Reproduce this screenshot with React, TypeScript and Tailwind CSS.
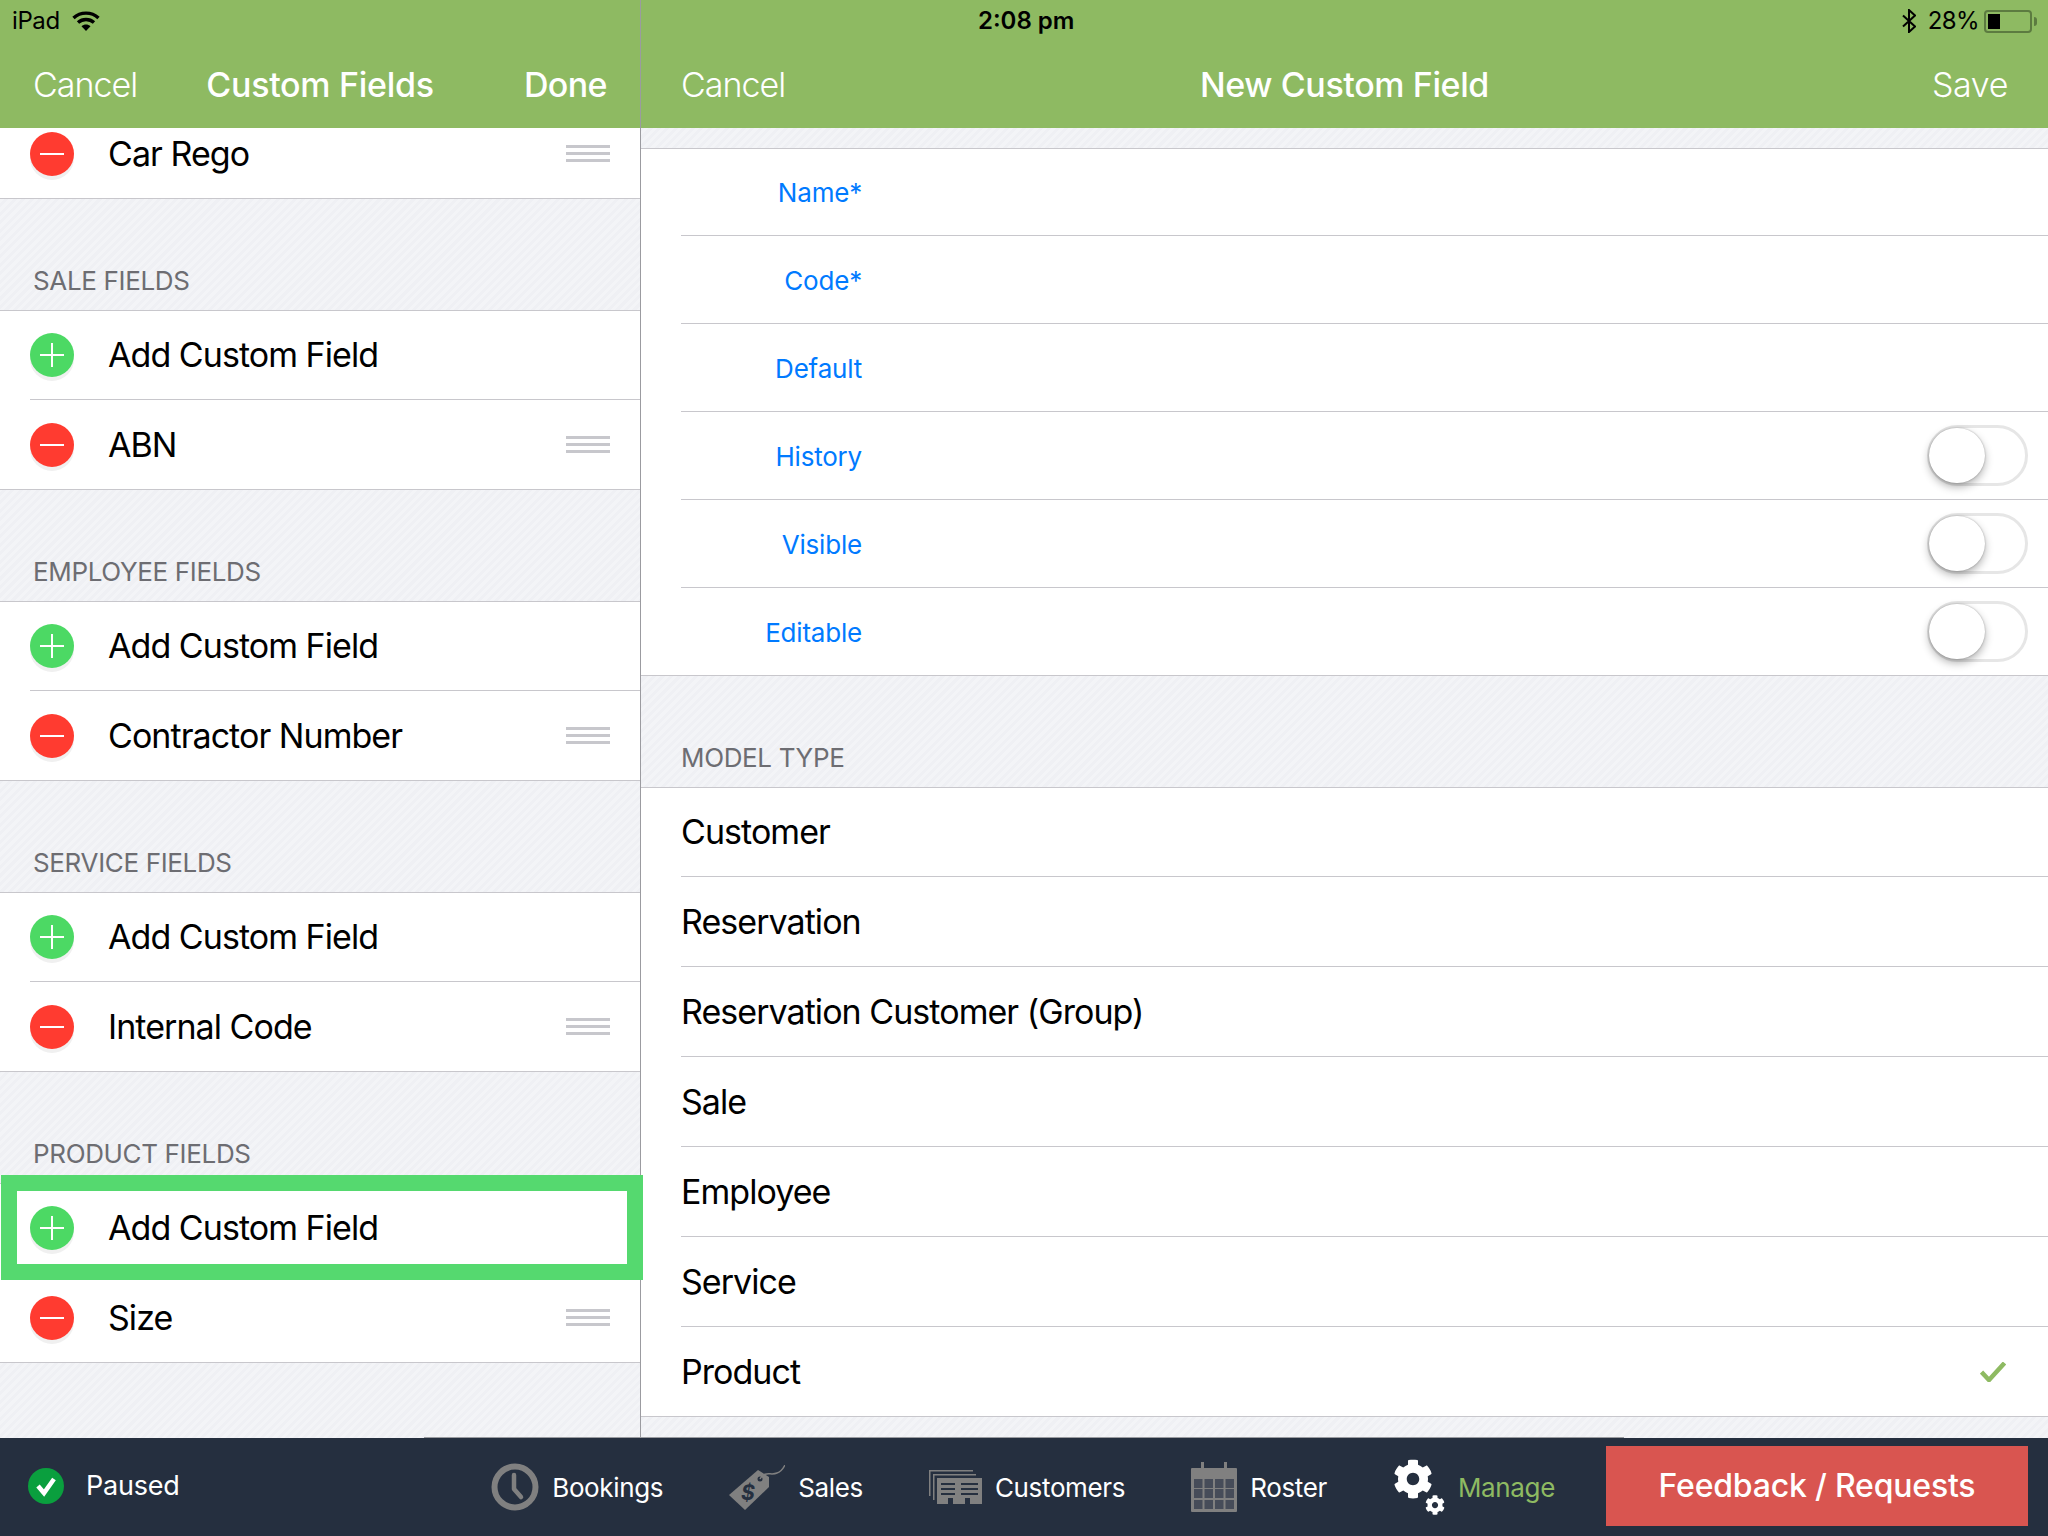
import React from 'react';
import { FaCog } from 'react-icons/fa';

const stripes =
  'bg-[repeating-linear-gradient(135deg,#eff0f4_0px,#eff0f4_3px,#f3f4f7_3px,#f3f4f7_6px)]';

const sections = [
  { title: 'SALE FIELDS', item: 'ABN' },
  { title: 'EMPLOYEE FIELDS', item: 'Contractor Number' },
  { title: 'SERVICE FIELDS', item: 'Internal Code' },
  { title: 'PRODUCT FIELDS', item: 'Size', highlight: true },
];

const formFields = [
  { label: 'Name*' },
  { label: 'Code*' },
  { label: 'Default' },
  { label: 'History', toggle: true },
  { label: 'Visible', toggle: true },
  { label: 'Editable', toggle: true },
];

const modelTypes = ['Customer', 'Reservation', 'Reservation Customer (Group)', 'Sale', 'Employee', 'Service', 'Product'];

const RoundButton = ({ add }: { add?: boolean }) => (
  <div
    className={`relative w-[44px] h-[44px] shrink-0 rounded-full shadow-[0_4px_0_#f0f0f0] ${add ? 'bg-[#4cd964]' : 'bg-[#ff3b30]'}`}
  >
    <div className="absolute left-[10px] top-[21px] w-[24px] h-[2px] bg-white" />
    {add && <div className="absolute left-[21px] top-[10px] w-[2px] h-[24px] bg-white" />}
  </div>
);

const DragHandle = () => (
  <div className="flex flex-col gap-[4px] w-[44px] mr-[30px]">
    <div className="h-[3px] bg-[#c7c7cc]" />
    <div className="h-[3px] bg-[#c7c7cc]" />
    <div className="h-[3px] bg-[#c7c7cc]" />
  </div>
);

const DeleteRow = ({ label }: { label: string }) => (
  <div className="h-[90px] pl-[30px] flex items-center bg-white border-b border-[#c8c7cc]">
    <RoundButton />
    <span className="ml-[34px] flex-1 text-[34px] tracking-[-0.95px] text-black">{label}</span>
    <DragHandle />
  </div>
);

const SectionHeader = ({ title }: { title: string }) => (
  <div className="h-[112px] pl-[33px] flex items-end pb-[14px] border-b border-[#c8c7cc]">
    <span className="text-[26px] leading-[30px] tracking-[-0.35px] text-[#6d6d72]">{title}</span>
  </div>
);

const Section = ({ title, item, highlight }: { title: string; item: string; highlight?: boolean }) => (
  <div>
    <SectionHeader title={title} />
    <div className="relative h-[89px] pl-[30px] bg-white">
      <div className="h-full flex items-center border-b border-[#c8c7cc]">
        <RoundButton add />
        <span className="ml-[34px] -mt-[2px] text-[34px] tracking-[-0.95px] text-black">Add Custom Field</span>
      </div>
      {highlight && (
        <div className="absolute z-10 -top-[9px] left-px w-[642px] h-[105px] border-[16px] border-[#55d96f]" />
      )}
    </div>
    <DeleteRow label={item} />
  </div>
);

const Toggle = () => (
  <div className="relative w-[101px] h-[61px] mr-[20px] rounded-full border-[3px] border-[#e6e6e6] bg-white">
    <div className="absolute -left-px top-0 w-[56px] h-[55px] rounded-full bg-white shadow-[0_4px_8px_rgba(0,0,0,0.3),0_0_2px_rgba(0,0,0,0.3)]" />
  </div>
);

const WifiIcon = () => (
  <svg width="28" height="20" viewBox="0 0 28 20" fill="none" stroke="#000" strokeWidth="3.4">
    <path d="M1.5 7 C8.5 0.5 19.5 0.5 26.5 7" />
    <path d="M6 11.5 C10.5 7.5 17.5 7.5 22 11.5" />
    <path d="M14 20 L9.5 15.2 C12 13 16 13 18.5 15.2 Z" fill="#000" stroke="none" />
  </svg>
);

const BluetoothIcon = () => (
  <svg width="14" height="24" viewBox="0 0 14 24" fill="none" stroke="#000" strokeWidth="2">
    <path d="M1 6.5 L13 17.5 L7 23 V1 L13 6.5 L1 17.5" />
  </svg>
);

const Battery = () => (
  <div className="flex items-center">
    <div className="w-[48px] h-[23px] rounded-[4px] border-2 border-[#5c7b40] p-[2px]">
      <div className="w-[12px] h-full bg-black" />
    </div>
    <div className="ml-[2px] w-[3px] h-[9px] rounded-r-sm bg-[#5c7b40]" />
  </div>
);

const ClockIcon = () => (
  <svg width="48" height="48" viewBox="0 0 48 48" fill="none" stroke="#808080">
    <circle cx="24" cy="24" r="20.5" strokeWidth="6" />
    <path d="M23 12 V26 L30 34" strokeWidth="4.5" strokeLinecap="round" strokeLinejoin="round" />
  </svg>
);

const TagIcon = () => (
  <svg width="56" height="45" viewBox="0 0 56 45" fill="none">
    <path d="M0 30 L29 5 L40 12 L40 22 L16 45 Z" fill="#808080" />
    <circle cx="31" cy="14" r="2.5" fill="#252f3f" />
    <path d="M31 14 C36 5 42 11 48 8 C52 7 54 4 56 0" stroke="#808080" strokeWidth="1.5" />
    <text x="12" y="35" fontSize="21" fontWeight="700" fontStyle="italic" fill="#252f3f">
      $
    </text>
  </svg>
);

const CustomersIcon = () => (
  <svg width="53" height="34" viewBox="0 0 53 34" fill="none">
    <path d="M0 0 H44 V1.5 H1.5 V26 H0 Z" fill="#808080" />
    <path d="M4 4 H47 V5.5 H5.5 V30 H4 Z" fill="#808080" />
    <path d="M8 8 H53 V34 H41 V28 H36 V34 H24 V28 H19 V34 H8 Z" fill="#808080" />
    <path d="M12 14 H26 M12 19 H26 M12 24 H26 M32 14 H49 M32 19 H49 M32 24 H49" stroke="#252f3f" strokeWidth="2" />
  </svg>
);

const CalendarIcon = () => (
  <svg width="46" height="50" viewBox="0 0 46 50" fill="none">
    <rect x="0" y="6" width="46" height="44" rx="1" fill="#808080" />
    <rect x="10" y="0" width="3" height="10" fill="#808080" />
    <rect x="33" y="0" width="3" height="10" fill="#808080" />
    {[17, 27, 38].map((y) =>
      [3, 13.5, 24, 34.5].map((x) => <rect key={`${x}-${y}`} x={x} y={y} width="8.5" height="9" fill="#464c59" />),
    )}
  </svg>
);

const GearsIcon = () => (
  <div className="relative w-[52px] h-[56px]">
    <FaCog className="absolute left-0 top-0 text-white" size={40} />
    <FaCog className="absolute right-0 bottom-0 text-white" size={20} />
  </div>
);

const PausedIcon = () => (
  <svg width="36" height="36" viewBox="0 0 36 36">
    <circle cx="18" cy="18" r="18" fill="#0a9f3e" />
    <path d="M10 18 L16 25 L26 11" fill="none" stroke="#fff" strokeWidth="4.5" />
  </svg>
);

const NavItem = ({ icon, label, active }: { icon: React.ReactNode; label: string; active?: boolean }) => (
  <div className="flex items-center gap-[13px]">
    {icon}
    <span className={`text-[26px] tracking-[-0.35px] ${active ? 'text-[#8eba62]' : 'text-white'}`}>{label}</span>
  </div>
);

export default function App() {
  return (
    <div className="w-[2048px] h-[1536px] flex flex-col overflow-hidden bg-white font-['Inter',sans-serif]">
      <div className="flex h-[1438px]">
        {/* left panel */}
        <div className={`relative w-[641px] h-full flex flex-col border-r border-[#9b9ba0] ${stripes}`}>
          <div className="h-[128px] shrink-0 bg-[#8eba62]">
            <div className="h-[42px] pl-[12px] flex items-center gap-[12px] text-[24px] tracking-[-0.4px] text-black">
              <span>iPad</span>
              <WifiIcon />
            </div>
            <div className="h-[84px] px-[33px] grid grid-cols-[1fr_auto_1fr] items-center text-[34px] text-white">
              <span className="font-light tracking-[-1px]">Cancel</span>
              <span className="font-medium tracking-[-0.3px]">Custom Fields</span>
              <span className="font-medium tracking-[-0.6px] text-right">Done</span>
            </div>
          </div>
          <div className="h-[71px] overflow-hidden flex flex-col justify-end shrink-0">
            <div className="shrink-0">
              <DeleteRow label="Car Rego" />
            </div>
          </div>
          {sections.map((s) => (
            <Section key={s.title} title={s.title} item={s.item} highlight={s.highlight} />
          ))}
        </div>

        {/* right panel */}
        <div className={`flex-1 h-full flex flex-col ${stripes}`}>
          <div className="h-[128px] shrink-0 bg-[#8eba62]">
            <div className="h-[42px] pl-[337px] pr-[11px] flex items-center justify-between text-[24px] text-black">
              <span className="font-semibold">2:08 pm</span>
              <div className="flex items-center gap-[8px]">
                <BluetoothIcon />
                <span className="ml-[4px] -mr-[3px] tracking-[-0.6px]">28%</span>
                <Battery />
              </div>
            </div>
            <div className="h-[84px] px-[40px] grid grid-cols-[1fr_auto_1fr] items-center text-[34px] text-white">
              <span className="font-light tracking-[-1px]">Cancel</span>
              <span className="font-medium tracking-[-0.4px]">New Custom Field</span>
              <span className="font-light tracking-[-0.4px] text-right">Save</span>
            </div>
          </div>
          <div className="h-[21px] shrink-0 border-b border-[#c8c7cc]" />
          <div className="bg-white">
            {formFields.map((f, i) => (
              <div key={f.label} className={`${i === 0 ? 'h-[87px]' : 'h-[88px]'} ${i === 5 ? 'border-b border-[#c8c7cc]' : ''} pl-[40px]`}>
                <div className={`h-full flex items-center justify-between ${i < 5 ? 'border-b border-[#c8c7cc]' : ''}`}>
                  <span className="w-[181px] pt-[1px] text-right text-[26px] tracking-[-0.2px] text-[#007aff]">{f.label}</span>
                  {f.toggle && <Toggle />}
                </div>
              </div>
            ))}
          </div>
          <div className="pl-[40px]">
            <div className="h-[111px] flex items-end pb-[14px]">
              <span className="text-[26px] leading-[30px] tracking-[-0.35px] text-[#6d6d72]">MODEL TYPE</span>
            </div>
          </div>
          <div className="bg-white border-t border-[#c8c7cc]">
            {modelTypes.map((m, i) => (
              <div key={m} className={`${i === 0 ? 'h-[89px]' : 'h-[90px]'} ${i === 6 ? 'border-b border-[#c8c7cc]' : ''} pl-[40px]`}>
                <div className={`h-full flex items-center justify-between ${i < 6 ? 'border-b border-[#c8c7cc]' : ''}`}>
                  <span className="-mt-[1px] text-[34px] tracking-[-0.95px] text-black">{m}</span>
                  {m === 'Product' && (
                    <svg width="26" height="20" viewBox="0 0 26 20" fill="none" stroke="#8eba62" strokeWidth="4.5" className="mr-[42px]">
                      <path d="M1.5 10 L9 18 L24.5 1" />
                    </svg>
                  )}
                </div>
              </div>
            ))}
          </div>
        </div>
      </div>

      {/* bottom bar */}
      <div className="relative h-[98px] flex items-center justify-between bg-[#252f3f] pl-[28px] pr-[20px]">
        <div className="absolute -top-px left-[424px] w-[1200px] h-px bg-[#9a9ca0]" />
        <div className="flex items-center gap-[22px] -mt-[2px]">
          <PausedIcon />
          <span className="pt-[1px] text-[27px] tracking-[-0.2px] text-white">Paused</span>
        </div>
        <div className="flex items-center gap-[66px]">
          <NavItem icon={<ClockIcon />} label="Bookings" />
          <NavItem icon={<TagIcon />} label="Sales" />
          <NavItem icon={<CustomersIcon />} label="Customers" />
          <NavItem icon={<CalendarIcon />} label="Roster" />
          <NavItem icon={<GearsIcon />} label="Manage" active />
          <div className="-ml-[15px] mb-[2px] w-[422px] h-[80px] flex items-center justify-center bg-[#d95550] text-[32px] font-medium tracking-[-0.2px] text-white">
            Feedback / Requests
          </div>
        </div>
      </div>
    </div>
  );
}
